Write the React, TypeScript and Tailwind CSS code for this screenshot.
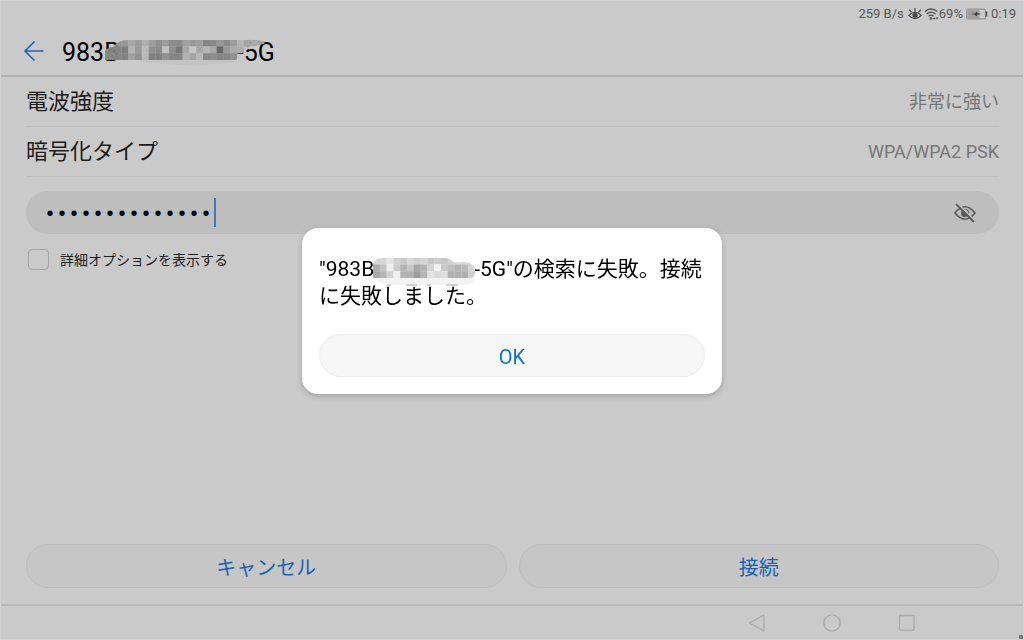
import type { ReactNode } from "react";

const TITLE_CELLS = [
    ["#b0b0b0", "#a0a0a0", "#929292", "#969696", "#a8a8a8", "#9c9c9c", "#b0b0b0", "#9e9e9e", "#8e8e8e", "#9c9c9c", "#8c8c8c", "#8a8a8a", "#a0a0a0", "#989898", "#9e9e9e", "#868686", "#888888", "#989898", "#8c8c8c", "#9c9c9c", "#b4b4b4", "#a2a2a2", "#aaaaaa", "#a4a4a4"],
    ["#8c8c8c", "#828282", "#868686", "#7e7e7e", "#b4b4b4", "#9a9a9a", "#bcbcbc", "#909090", "#8a8a8a", "#c0c0c0", "#909090", "#787878", "#a8a8a8", "#c6c6c6", "#a6a6a6", "#b4b4b4", "#a8a8a8", "#686868", "#989898", "#a8a8a8", "#acacac", "#c0c0c0", "#c6c6c6", "#c8c8c8"],
    ["#8c8c8c", "#868686", "#848484", "#828282", "#a0a0a0", "#929292", "#b8b8b8", "#808080", "#808080", "#909090", "#888888", "#848484", "#b2b2b2", "#a4a4a4", "#b8b8b8", "#888888", "#8c8c8c", "#848484", "#868686", "#909090"],
];

const DIALOG_CELLS = [
    ["#d6d6d6", "#d6d6d6", "#e6e6e6", "#d0d0d0", "#c8c8c8", "#d8d8d8", "#cecece", "#d6d6d6", "#c6c6c6", "#cccccc", "#c6c6c6", "#d0d0d0", "#dcdcdc", "#d8d8d8", "#d8d8d8"],
    ["#aeaeae", "#c4c4c4", "#eeeeee", "#cccccc", "#b4b4b4", "#c8c8c8", "#a8a8a8", "#b4b4b4", "#d2d2d2", "#f2f2f2", "#cacaca", "#c0c0c0", "#b6b6b6", "#bababa", "#d4d4d4"],
    ["#a8a8a8", "#b6b6b6", "#d2d2d2", "#f0f0f0", "#b4b4b4", "#b0b0b0", "#9c9c9c", "#b4b4b4", "#e2e2e2", "#dadada", "#dedede", "#b0b0b0", "#b0b0b0", "#b0b0b0", "#d0d0d0"],
];

const Cells = ({ rows, x, y }: { rows: string[][]; x: number; y: number }) => (
    <>
        {rows.map((row, r) =>
            row.map((fill, c) => (
                <rect key={`${r}-${c}`} x={x + c * 6.8} y={y + r * 6.8} width="7" height="7" fill={fill} />
            ))
        )}
    </>
);

const TitleMask = () => (
    <svg className="relative -ml-[15px] -mr-8 h-8 w-[164px] shrink-0" viewBox="0 0 164 32" aria-hidden="true">
        <clipPath id="title-mask">
            <path d="M0 23V14Q3 10 8 10Q14 3 22 3H138Q156 2 163 6Q145 9 136 17L131 23Z" />
        </clipPath>
        <path d="M30 22H132V25Q90 30 58 27Q38 26 30 22Z" fill="#c4c4c4" />
        <g clipPath="url(#title-mask)">
            <Cells rows={TITLE_CELLS} x={-4} y={2.6} />
        </g>
    </svg>
);

const DialogMask = () => (
    <svg
        className="relative -mb-3 -ml-px -mr-1 inline-block h-[31px] w-[105px] align-baseline"
        viewBox="0 0 105 31"
        aria-hidden="true"
    >
        <clipPath id="dialog-mask">
            <path d="M0 21V7Q2 1 10 1H72Q77 1 80 5H92Q99 5 102 12Q103 18 99 21Z" />
        </clipPath>
        <path d="M0 18H103Q101 28 90 28H16Q6 28 0 18Z" fill="#f3f3f3" />
        <path d="M14 27H18V29H14ZM33 27H44V29H33ZM54 27H58V29H54ZM73 27H85V29H73Z" fill="#d0d0d0" />
        <g clipPath="url(#dialog-mask)">
            <Cells rows={DIALOG_CELLS} x={0} y={0.6} />
        </g>
    </svg>
);

const StatusBar = () => (
    <div className="flex h-[26px] items-center justify-end pr-[7px] text-[13px] leading-4 text-[#555555]">
        <span>259 B/s</span>
        <svg className="ml-1 h-[14px] w-[14px]" viewBox="0 0 14 14" fill="none" stroke="#4c4c4c" strokeWidth="1.3">
            <path d="M0.8 8.4Q7 1.8 13.2 8.4Q7 15 0.8 8.4Z" />
            <path d="M7 4.5V1M3.4 5.4L1.2 2.6M10.6 5.4L12.8 2.6" />
            <circle cx="7" cy="8.3" r="2" fill="#4c4c4c" />
        </svg>
        <svg className="ml-[2px] h-[14px] w-[15px]" viewBox="0 0 15 14" fill="none" stroke="#505050" strokeWidth="1.3">
            <path d="M0.8 4.6Q7 -0.6 13.4 4.6M2.6 7Q7 3.2 11.6 7M4.6 9.3Q7 7 9.6 9.3" />
            <circle cx="7" cy="11.5" r="0.7" fill="#505050" />
            <path d="M9.3 12L10.3 10.6L11.3 12ZM12 10.8H14L13 12.2Z" fill="#505050" strokeWidth="0.5" />
        </svg>
        <span>69%</span>
        <svg className="ml-[3px] h-3 w-[22px]" viewBox="0 0 22 12" fill="none">
            <rect x="0.6" y="1.1" width="18.8" height="9.8" rx="1" stroke="#858585" />
            <rect x="1.5" y="2" width="12" height="8" fill="#a0a0a0" />
            <path d="M20.5 3.5V8.5" stroke="#555555" strokeWidth="1.6" />
            <path d="M5 6L9.4 5.2L10.4 3.6L12 5.2L15.5 6L11 6.8L10.4 8.4L8.8 6.8Z" fill="#404040" />
        </svg>
        <span className="ml-[3px]">0:19</span>
    </div>
);

const InfoRow = ({ label, children }: { label: string; children: ReactNode }) => (
    <div className="flex h-[50px] items-center justify-between border-b border-[#bfbfbf] pt-px">
        <dt className="text-[22px] leading-8 text-[#1c1c1c]">{label}</dt>
        <dd className="text-lg text-[#767676]">{children}</dd>
    </div>
);

const PasswordField = () => (
    <div className="mt-[14px] flex h-[43px] items-center rounded-full bg-[#bebebe] pl-[18px] pr-[22px]">
        <input
            type="password"
            aria-label="パスワード"
            defaultValue="00000000000000"
            className="h-8 bg-transparent pr-[2px] pt-1 font-['Liberation_Mono',monospace] text-xl text-black outline-none [field-sizing:content]"
        />
        <span className="h-[29px] w-[2px] bg-[#3f79bb]" />
        <button type="button" aria-label="パスワードを表示" className="ml-auto">
            <svg className="h-6 w-6" viewBox="0 0 24 24" fill="none" stroke="#5a5a5a" strokeWidth="1.6">
                <path d="M2 12Q7 5.8 12 5.8T22 12Q17 18.2 12 18.2T2 12Z" />
                <path d="M12 8.2A3.9 3.9 0 1 0 15.9 12H12Z" fill="#5a5a5a" stroke="none" />
                <path d="M12.5 8.2A3.8 3.8 0 0 1 15.8 12" strokeWidth="1" />
                <path d="M4.4 2.6L22.4 20.4" stroke="#bebebe" strokeWidth="1.6" />
                <path d="M3 3.2L21 21" strokeWidth="1.8" />
            </svg>
        </button>
    </div>
);

const NavigationBar = () => (
    <nav className="flex h-[35px] items-center justify-end gap-[51px] border-t-2 border-[#bababa] pr-[104px]">
        <button type="button" aria-label="戻る">
            <svg className="h-6 w-6" viewBox="0 0 24 24" fill="none" stroke="#acacac" strokeWidth="1.3">
                <path d="M19 4V20L4.5 12Z" strokeLinejoin="round" />
            </svg>
        </button>
        <button type="button" aria-label="ホーム">
            <svg className="h-6 w-6" viewBox="0 0 24 24" fill="none" stroke="#acacac" strokeWidth="1.3">
                <circle cx="12" cy="12" r="8.2" />
            </svg>
        </button>
        <button type="button" aria-label="履歴">
            <svg className="h-6 w-6" viewBox="0 0 24 24" fill="none" stroke="#acacac" strokeWidth="1.3">
                <rect x="4.5" y="4.5" width="14.6" height="14.6" rx="0.5" />
            </svg>
        </button>
    </nav>
);

const FailureDialog = () => (
    <div className="fixed inset-0 flex items-center justify-center pb-[18px]">
        <div
            role="alertdialog"
            aria-modal="true"
            aria-describedby="failure-message"
            className="w-[420px] rounded-2xl bg-white px-[17px] pb-[17px] pt-7 shadow-[0_2px_6px_rgba(0,0,0,0.2)]"
        >
            <p id="failure-message" className="text-[21px] leading-[27px] text-black">
                "983B
                <DialogMask />
                -5G"の検索に失敗。接続に失敗しました。
            </p>
            <button
                type="button"
                className="mt-6 block h-[43px] w-full rounded-full border border-[#ececec] bg-[#f6f6f6] pt-[3px] text-xl text-[#1272cc]"
            >
                OK
            </button>
        </div>
    </div>
);

export default function App() {
    return (
        <div
            lang="ja"
            className="relative flex min-h-screen flex-col border border-[#d2d2d2] bg-[#cacaca] font-[Roboto,'Noto_Sans_CJK_JP',sans-serif]"
        >
            <StatusBar />

            <header className="flex h-[50px] items-center border-b-2 border-[#b3b3b3] pl-[21px]">
                <button type="button" aria-label="戻る">
                    <svg className="h-6 w-6" viewBox="0 0 24 24" fill="none" stroke="#1f66b5" strokeWidth="1.6">
                        <path d="M21.5 12H3M12.5 2.5L3 12L12.5 21.5" />
                    </svg>
                </button>
                <h1 className="ml-4 flex items-center pt-1 text-[25px] leading-8 text-black">
                    <span>983B</span>
                    <TitleMask />
                    <span>-5G</span>
                </h1>
            </header>

            <main className="flex flex-1 flex-col pb-4 pl-[25px] pr-6">
                <dl>
                    <InfoRow label="電波強度">非常に強い</InfoRow>
                    <InfoRow label="暗号化タイプ">WPA/WPA2 PSK</InfoRow>
                </dl>

                <PasswordField />

                <label className="mt-[15px] flex items-center gap-[11px] self-start pl-[2px] text-sm text-[#1c1c1c]">
                    <input
                        type="checkbox"
                        className="h-[21px] w-[21px] appearance-none rounded border border-[#a8a8a8]"
                    />
                    詳細オプションを表示する
                </label>

                <div className="mt-auto grid grid-cols-2 gap-3 text-xl text-[#1a62b3]">
                    <button type="button" className="h-11 rounded-full border border-[#bebebe] bg-[#c6c6c6] pt-1">
                        キャンセル
                    </button>
                    <button type="button" className="h-11 rounded-full border border-[#bebebe] bg-[#c6c6c6] pt-1">
                        接続
                    </button>
                </div>
            </main>

            <NavigationBar />
            <span className="absolute bottom-0 right-0 h-1 w-1 bg-[#7a7a7a]" />

            <FailureDialog />
        </div>
    );
}
